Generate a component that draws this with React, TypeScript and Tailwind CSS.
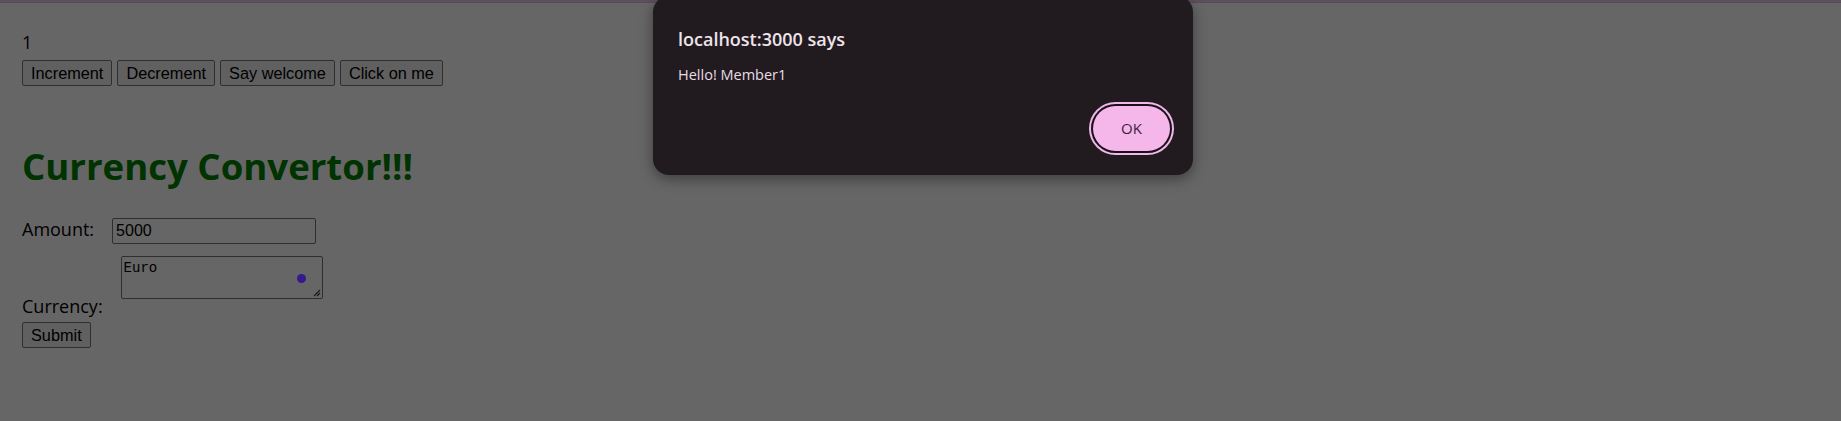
import { useState } from 'react';

const btn =
  "rounded-[2px] border border-[#767676] bg-[#efefef] px-[8px] py-[3px] font-['Liberation_Sans',Arial,sans-serif] text-[16.3px] leading-[18px] text-black";

export default function App() {
  const [count, setCount] = useState(1);
  const [amount, setAmount] = useState('5000');
  const [currency, setCurrency] = useState('Euro');

  return (
    <div className="relative h-[421px] w-[1841px] overflow-hidden bg-white font-['Open_Sans','Noto_Sans',sans-serif] text-black">
      {/* tab strip edge */}
      <div className="h-[2px] bg-[#eac4ea]" />
      <div className="h-[1px] bg-[#d4c2d4]" />

      {/* page */}
      <div className="pl-[22px]">
        <div className="mt-[27px] text-[18px] leading-[24px]">{count}</div>
        <div className="mt-[6px] flex gap-[5px]">
          <button className={btn} onClick={() => setCount(count + 1)}>Increment</button>
          <button className={btn} onClick={() => setCount(count - 1)}>Decrement</button>
          <button className={btn}>Say welcome</button>
          <button className={btn}>Click on me</button>
        </div>

        <h1 className="mt-[56px] text-[36.6px] font-bold leading-[48px] text-[#008000]">Currency Convertor!!!</h1>

        <div className="mt-[27px] flex items-start gap-[18px]">
          <label className="text-[18px] leading-[24px]">Amount:</label>
          <input
            value={amount}
            onChange={(e) => setAmount(e.target.value)}
            className="mt-[1px] h-[26px] w-[204px] rounded-[2px] border border-[#767676] bg-white px-[3px] font-['Liberation_Sans',Arial,sans-serif] text-[16px] text-black outline-none"
          />
        </div>

        <div className="mt-[12px] flex items-end gap-[18px]">
          <label className="text-[18px] leading-[24px]">Currency:</label>
          <div className="relative mb-[19px]">
            <textarea
              value={currency}
              onChange={(e) => setCurrency(e.target.value)}
              className="block h-[43px] w-[202px] resize-none rounded-[2px] border border-[#767676] bg-white px-[2px] py-[3px] font-['Liberation_Mono','DejaVu_Sans_Mono',monospace] text-[14px] leading-[16px] text-black outline-none"
            />
            {/* extension badge shows through the backdrop */}
            <span className="absolute left-[176px] top-[18px] z-10 h-[9px] w-[9px] rounded-full bg-[#36198c]" />
            <svg className="absolute bottom-[2px] right-[2px]" width="9" height="9" viewBox="0 0 9 9">
              <path d="M8 2 L2 8 M8 5 L5 8" stroke="#444" strokeWidth="1.2" />
            </svg>
          </div>
        </div>

        <button className={`${btn} mt-[4px]`}>Submit</button>
      </div>

      {/* alert backdrop */}
      <div className="absolute inset-0 bg-black/60" />

      {/* alert dialog */}
      <div className="absolute left-[653px] top-[-4px] z-20 flex w-[540px] flex-col rounded-[16px] bg-[#211b20] px-[25px] pb-[24px] pt-[31px] shadow-[0_4px_14px_rgba(0,0,0,0.4)]">
        <div className="text-[18px] font-semibold leading-[24px] text-[#efe3ec]">localhost:3000 says</div>
        <div className="mt-[14px] text-[14.5px] leading-[20px] text-[#e8dce6]">Hello! Member1</div>
        <div className="mt-[21px] flex justify-end">
          <button className="mr-[-2px] h-[45px] w-[77px] rounded-full bg-[#f5b6ea] text-[15px] font-medium text-[#3c2241] shadow-[0_0_0_2px_#17121a,0_0_0_4px_#f5b6ea]">
            OK
          </button>
        </div>
      </div>
    </div>
  );
}
